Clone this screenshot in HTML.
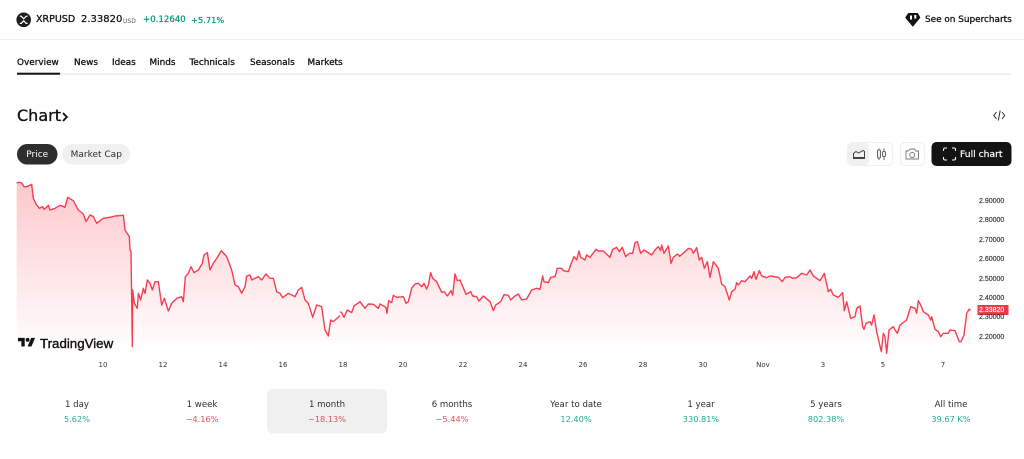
<!DOCTYPE html>
<html><head><meta charset="utf-8">
<style>
html,body{margin:0;padding:0;background:#fff}
#p{position:relative;width:1024px;height:459px;overflow:hidden;background:#fff;font-family:"DejaVu Sans","Liberation Sans",sans-serif;color:#131313;font-size:9px}
.a{position:absolute;white-space:nowrap;line-height:12px}
.tab{top:57px;font-size:8.9px;font-weight:400;-webkit-text-stroke:.3px #131313}
.tl{top:358.5px;width:30px;text-align:center;font-size:7px;color:#333}
.pl{left:979px;font-family:"Liberation Sans",sans-serif;font-size:7px;color:#333;-webkit-text-stroke:.15px #333}
.c{width:120px;text-align:center}
.r1{top:398.5px;font-size:8.6px;color:#2e2e2e}
.r2{top:413px;font-size:8.2px}
.g{color:#22ab94}.d{color:#e0525f}
</style></head><body><div id="p">

<svg class="a" style="left:0;top:0" width="1024" height="459" viewBox="0 0 1024 459">
<defs>
<linearGradient id="g1" gradientUnits="userSpaceOnUse" x1="0" x2="0" y1="159" y2="666"><stop offset="0" stop-color="#fdc8cc"/><stop offset="1" stop-color="#fff"/></linearGradient>
<linearGradient id="g2" gradientUnits="userSpaceOnUse" x1="0" x2="0" y1="39" y2="546"><stop offset="0" stop-color="#fdc8cc"/><stop offset="1" stop-color="#fff"/></linearGradient>
</defs>
<g transform="translate(0,130) scale(.33333)">
<path fill="url(#g1)" d="M50,666L50,158 60,157 66,160 72,170 80,170 95,163 100,205 108,222 118,235 128,230 132,238 145,226 150,240 165,235 180,226 195,232 203,202 220,212 235,240 250,252 258,275 270,255 280,260 290,280 300,272 310,265 330,262 345,258 370,256 375,300 388,320 390,360 393,365 397,650 398,480 403,520 412,535 415,490 422,510 430,475 435,490 442,450 450,460 457,480 465,455 475,455 485,525 493,505 505,543 515,520 530,505 545,500 550,515 556,440 565,430 573,410 582,428 595,420 607,400 612,375 622,368 630,420 640,400 650,385 664,362 680,380 695,420 705,465 715,470 725,490 735,470 740,438 750,435 755,450 775,440 785,450 798,432 810,445 820,445 830,485 840,490 848,503 865,490 885,500 895,480 905,472 915,510 925,520 938,562 950,525 965,530 975,600 985,618 992,570 1000,575 1020,557 1023,557 1023,666Z"/>
<polyline fill="none" stroke="#f73d50" stroke-width="4.2" stroke-linejoin="round" points="50,158 60,157 66,160 72,170 80,170 95,163 100,205 108,222 118,235 128,230 132,238 145,226 150,240 165,235 180,226 195,232 203,202 220,212 235,240 250,252 258,275 270,255 280,260 290,280 300,272 310,265 330,262 345,258 370,256 375,300 388,320 390,360 393,365 397,650 398,480 403,520 412,535 415,490 422,510 430,475 435,490 442,450 450,460 457,480 465,455 475,455 485,525 493,505 505,543 515,520 530,505 545,500 550,515 556,440 565,430 573,410 582,428 595,420 607,400 612,375 622,368 630,420 640,400 650,385 664,362 680,380 695,420 705,465 715,470 725,490 735,470 740,438 750,435 755,450 775,440 785,450 798,432 810,445 820,445 830,485 840,490 848,503 865,490 885,500 895,480 905,472 915,510 925,520 938,562 950,525 965,530 975,600 985,618 992,570 1000,575 1020,557"/>
</g>
<g transform="translate(340,170) scale(.33333)">
<path fill="url(#g2)" d="M0,546L0,425 5,428 12,442 22,420 35,428 42,408 60,395 75,415 85,402 100,403 115,415 120,402 138,412 141,430 146,392 155,398 160,376 170,382 190,380 198,400 205,395 215,355 225,342 235,340 245,350 252,340 260,357 265,345 272,308 278,325 290,335 305,367 312,365 322,378 333,362 338,375 345,312 352,332 360,330 378,373 392,365 398,378 410,380 417,393 430,378 438,385 450,395 460,422 467,405 482,395 492,374 505,376 512,390 525,378 535,372 545,390 560,387 575,360 590,355 600,358 608,318 612,335 625,338 632,322 645,320 652,295 665,295 670,302 685,305 692,285 702,260 710,270 717,243 722,262 735,270 740,255 750,262 768,238 775,243 790,243 810,262 818,238 830,232 838,245 847,232 857,260 868,250 878,250 885,218 892,215 902,250 912,240 935,255 945,240 955,230 962,242 965,225 972,250 985,228 993,280 1000,262 1012,252 1020,262 1023,260 1023,546Z"/>
<polyline fill="none" stroke="#f73d50" stroke-width="4.2" stroke-linejoin="round" points="0,425 5,428 12,442 22,420 35,428 42,408 60,395 75,415 85,402 100,403 115,415 120,402 138,412 141,430 146,392 155,398 160,376 170,382 190,380 198,400 205,395 215,355 225,342 235,340 245,350 252,340 260,357 265,345 272,308 278,325 290,335 305,367 312,365 322,378 333,362 338,375 345,312 352,332 360,330 378,373 392,365 398,378 410,380 417,393 430,378 438,385 450,395 460,422 467,405 482,395 492,374 505,376 512,390 525,378 535,372 545,390 560,387 575,360 590,355 600,358 608,318 612,335 625,338 632,322 645,320 652,295 665,295 670,302 685,305 692,285 702,260 710,270 717,243 722,262 735,270 740,255 750,262 768,238 775,243 790,243 810,262 818,238 830,232 838,245 847,232 857,260 868,250 878,250 885,218 892,215 902,250 912,240 935,255 945,240 955,230 962,242 965,225 972,250 985,228 993,280 1000,262 1012,252 1020,258"/>
</g>
<g transform="translate(680,170) scale(.33333)">
<path fill="url(#g2)" d="M0,546L0,258 15,245 25,235 35,238 40,250 50,233 58,270 65,262 73,295 82,275 90,322 100,275 115,295 125,342 135,350 148,390 155,365 165,358 170,338 175,345 185,332 195,335 210,318 215,325 222,305 228,328 238,302 245,318 260,323 270,318 295,322 307,335 315,322 330,320 338,325 350,323 365,310 380,315 390,300 400,318 420,332 433,310 445,365 452,358 460,375 475,382 488,368 493,422 500,395 512,445 525,440 530,415 540,408 548,470 552,478 558,460 570,455 575,465 582,435 590,485 598,520 604,545 610,490 615,500 620,550 627,480 640,470 645,480 652,490 660,465 680,450 692,410 705,415 710,430 715,392 722,405 730,425 745,435 752,450 755,440 765,478 775,485 782,500 790,490 805,490 810,480 825,482 838,515 843,515 852,495 860,430 867,418 872,420 872,546Z"/>
<polyline fill="none" stroke="#f73d50" stroke-width="4.2" stroke-linejoin="round" points="-4,260 0,258 15,245 25,235 35,238 40,250 50,233 58,270 65,262 73,295 82,275 90,322 100,275 115,295 125,342 135,350 148,390 155,365 165,358 170,338 175,345 185,332 195,335 210,318 215,325 222,305 228,328 238,302 245,318 260,323 270,318 295,322 307,335 315,322 330,320 338,325 350,323 365,310 380,315 390,300 400,318 420,332 433,310 445,365 452,358 460,375 475,382 488,368 493,422 500,395 512,445 525,440 530,415 540,408 548,470 552,478 558,460 570,455 575,465 582,435 590,485 598,520 604,545 610,490 615,500 620,550 627,480 640,470 645,480 652,490 660,465 680,450 692,410 705,415 710,430 715,392 722,405 730,425 745,435 752,450 755,440 765,478 775,485 782,500 790,490 805,490 810,480 825,482 838,515 843,515 852,495 860,430 867,418 872,420"/>
</g>
<rect x="0" y="39" width="1024" height="1" fill="#f0f0f0"/>
<rect x="17" y="73" width="994" height="2" fill="#f0f0f0"/>
<rect x="17" y="72.7" width="43" height="2" fill="#131313"/>
<circle cx="23.7" cy="19.8" r="7.3" fill="#1e1e1e"/>
<path d="M19.8,16.2 L21.2,16.2 23.7,18.8 26.2,16.2 27.6,16.2 M19.8,23.4 L21.2,23.4 23.7,20.8 26.2,23.4 27.6,23.4" fill="none" stroke="#fff" stroke-width="1.2"/>
<path d="M908.5,13.5H917.5L919.8,17.5 912.8,26 905.8,17.5Z" fill="#131313" stroke="#131313" stroke-linejoin="round"/>
<rect x="910" y="15.5" width="2" height="4" fill="#fff"/><rect x="914.3" y="15" width="2" height="3.6" fill="#fff"/>
<path d="M63,113L66.8,117 63,121" fill="none" stroke="#131313" stroke-width="1.9"/>
<path d="M996.5,112L993.8,115.5 996.5,119M1002,112L1004.7,115.5 1002,119M1000.2,110.5L998.3,120.5" fill="none" stroke="#2e2e2e" stroke-width="1"/>
<rect x="847.5" y="142.5" width="45" height="23" rx="5" fill="#fff" stroke="#f0f0f0"/>
<rect x="848" y="143" width="21" height="22" rx="4" fill="#f0f0f0"/>
<path d="M853.5,153.5L856,151.5 858.5,153 863,150.5 864.5,151.5V157.5H853.5ZM853,158.5H865" fill="none" stroke="#444" stroke-width="1"/>
<path d="M879,148.5V160M884,148.5V160" stroke="#666" stroke-width="1"/>
<rect x="877.5" y="150" width="3" height="8" rx="1" fill="#f0f0f0" stroke="#666"/>
<rect x="882.5" y="151.5" width="3" height="5" rx="1" fill="#f0f0f0" stroke="#666"/>
<rect x="900.5" y="142.5" width="24" height="23" rx="5" fill="#fff" stroke="#f0f0f0"/>
<path d="M906,151H908.5L910,149H914.5L916,151H918.5V159H906Z" fill="none" stroke="#777" stroke-width=".9"/>
<circle cx="912.2" cy="155" r="2.5" fill="none" stroke="#777" stroke-width=".9"/>
<rect x="931.5" y="142" width="80" height="24" rx="5" fill="#131313"/>
<path d="M943.5,151V149.5A1.5,1.5 0 0 1 945,148H947M952,148H954A1.5,1.5 0 0 1 955.5,149.5V151M955.5,157V158.5A1.5,1.5 0 0 1 954,160H952M947,160H945A1.5,1.5 0 0 1 943.5,158.5V157" fill="none" stroke="#fff" stroke-width="1.1"/>
<rect x="17" y="144" width="40.5" height="20.5" rx="10.2" fill="#2e2e2e"/>
<rect x="62.5" y="144" width="67.5" height="20.5" rx="10.2" fill="#f0f0f0"/>
<rect x="977.5" y="305" width="31" height="10" fill="#f23645"/>
<g transform="translate(18,336) scale(.48)" fill="#131313"><path d="M14 22H7V11H0V4h14v18zM28 22h-8l7.5-18h8L28 22z"/><circle cx="20" cy="8" r="4"/></g>
<rect x="267" y="389" width="120" height="44.5" rx="6" fill="#f0f0f0"/>
</svg>

<div class="a" style="left:36px;top:14px;font-size:9.5px;-webkit-text-stroke:.3px #131313">XRPUSD</div>
<div class="a" style="left:81px;top:14px;font-size:10px;-webkit-text-stroke:.25px #131313">2.33820</div>
<div class="a" style="left:123px;top:15.5px;font-size:6px;color:#555">USD</div>
<div class="a" style="left:143px;top:14px;font-size:8.6px;color:#089981;-webkit-text-stroke:.25px #089981">+0.12640</div>
<div class="a" style="left:191px;top:14px;font-size:8.3px;color:#089981;-webkit-text-stroke:.25px #089981">+5.71%</div>
<div class="a" style="left:925px;top:14px;font-size:8.9px;-webkit-text-stroke:.3px #131313">See on Supercharts</div>

<div class="a tab" style="left:17px">Overview</div>
<div class="a tab" style="left:74px">News</div>
<div class="a tab" style="left:112px">Ideas</div>
<div class="a tab" style="left:149.5px">Minds</div>
<div class="a tab" style="left:189.5px">Technicals</div>
<div class="a tab" style="left:250px">Seasonals</div>
<div class="a tab" style="left:307.5px">Markets</div>

<div class="a" style="left:17px;top:106px;font-size:16px;line-height:20px;-webkit-text-stroke:.35px #131313">Chart</div>

<div class="a" style="left:17px;top:148.5px;width:40.5px;text-align:center;color:#fff">Price</div>
<div class="a" style="left:62.5px;top:148.5px;width:67.5px;text-align:center;color:#2e2e2e">Market Cap</div>
<div class="a" style="left:960px;top:148.5px;font-size:9.2px;color:#fff;-webkit-text-stroke:.2px #fff">Full chart</div>

<div class="a pl" style="top:196px">2.90000</div>
<div class="a pl" style="top:215px">2.80000</div>
<div class="a pl" style="top:235px">2.70000</div>
<div class="a pl" style="top:254px">2.60000</div>
<div class="a pl" style="top:274px">2.50000</div>
<div class="a pl" style="top:293px">2.40000</div>
<div class="a pl" style="top:312px">2.30000</div>
<div class="a pl" style="top:331.5px">2.20000</div>
<div class="a pl" style="top:305px;color:#fff;-webkit-text-stroke:.15px #fff">2.33820</div>

<div class="a" style="left:40px;top:335.5px;font-family:'Liberation Sans',sans-serif;font-size:13.3px;line-height:16px;-webkit-text-stroke:.4px #131313">TradingView</div>

<div class="a tl" style="left:88px">10</div>
<div class="a tl" style="left:148px">12</div>
<div class="a tl" style="left:208px">14</div>
<div class="a tl" style="left:268px">16</div>
<div class="a tl" style="left:328px">18</div>
<div class="a tl" style="left:388px">20</div>
<div class="a tl" style="left:448px">22</div>
<div class="a tl" style="left:508px">24</div>
<div class="a tl" style="left:568px">26</div>
<div class="a tl" style="left:628px">28</div>
<div class="a tl" style="left:688px">30</div>
<div class="a tl" style="left:748px">Nov</div>
<div class="a tl" style="left:808px">3</div>
<div class="a tl" style="left:868px">5</div>
<div class="a tl" style="left:928px">7</div>

<div class="a c r1" style="left:17px">1 day</div><div class="a c r2 g" style="left:17px">5.62%</div>
<div class="a c r1" style="left:142px">1 week</div><div class="a c r2 d" style="left:142px">−4.16%</div>
<div class="a c r1" style="left:267px">1 month</div><div class="a c r2 d" style="left:267px">−18.13%</div>
<div class="a c r1" style="left:392px">6 months</div><div class="a c r2 d" style="left:392px">−5.44%</div>
<div class="a c r1" style="left:516px">Year to date</div><div class="a c r2 g" style="left:516px">12.40%</div>
<div class="a c r1" style="left:641px">1 year</div><div class="a c r2 g" style="left:641px">330.81%</div>
<div class="a c r1" style="left:766px">5 years</div><div class="a c r2 g" style="left:766px">802.38%</div>
<div class="a c r1" style="left:891px">All time</div><div class="a c r2 g" style="left:891px">39.67 K%</div>

</div></body></html>
